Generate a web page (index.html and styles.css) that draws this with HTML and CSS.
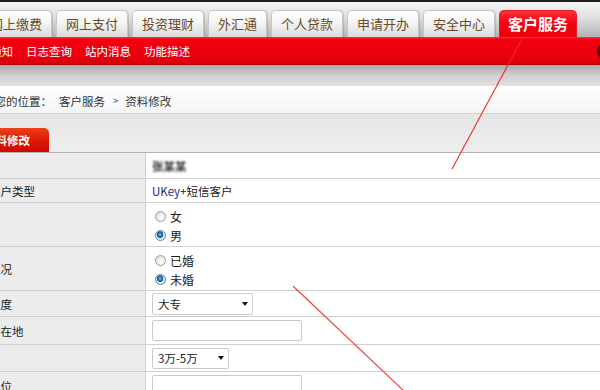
FILE: index.html
```html
<!DOCTYPE html>
<html lang="zh-CN">
<head>
<meta charset="utf-8">
<title>资料修改</title>
<link rel="stylesheet" href="styles.css">
</head>
<body>
<div class="topline"></div>
<header class="header">
  <nav class="tabs">
    <a class="tab">网上缴费</a>
    <a class="tab">网上支付</a>
    <a class="tab">投资理财</a>
    <a class="tab">外汇通</a>
    <a class="tab">个人贷款</a>
    <a class="tab">申请开办</a>
    <a class="tab">安全中心</a>
    <a class="tab active">客户服务</a>
  </nav>
</header>
<div class="redbar">
  <div class="menu">
    <a>通知</a>
    <a>日志查询</a>
    <a>站内消息</a>
    <a>功能描述</a>
  </div>
  <span class="knob"></span>
</div>
<div class="shade"></div>
<div class="crumb">
  <div class="crumb-inner">
    <span>您的位置：</span>
    <span class="crumb-link">客户服务</span>
    <span class="sep">&gt;</span>
    <span>资料修改</span>
  </div>
</div>
<div class="subtabs">
  <div class="subtab">资料修改</div>
</div>
<div class="form">
  <div class="row r1">
    <div class="label"></div>
    <div class="value"><span class="blur">张某某</span></div>
  </div>
  <div class="row r2">
    <div class="label"><span class="cut1">客户类型</span></div>
    <div class="value"><span class="latin">UKey</span>+短信客户</div>
  </div>
  <div class="row r3">
    <div class="label"></div>
    <div class="value">
      <div class="radios">
        <label class="opt"><input type="radio" name="sex" class="radio">女</label>
        <label class="opt"><input type="radio" name="sex" class="radio" checked>男</label>
      </div>
    </div>
  </div>
  <div class="row r4">
    <div class="label"><span class="cut3">婚姻状况</span></div>
    <div class="value">
      <div class="radios">
        <label class="opt"><input type="radio" name="mar" class="radio">已婚</label>
        <label class="opt"><input type="radio" name="mar" class="radio" checked>未婚</label>
      </div>
    </div>
  </div>
  <div class="row r5">
    <div class="label"><span class="cut3">教育程度</span></div>
    <div class="value">
      <div class="select"><span>大专</span><span class="caret"></span></div>
    </div>
  </div>
  <div class="row r6">
    <div class="label"><span class="cut1">所在地</span></div>
    <div class="value"><input class="field" type="text"></div>
  </div>
  <div class="row r7">
    <div class="label"></div>
    <div class="value">
      <div class="select small"><span>3万-5万</span><span class="caret"></span></div>
    </div>
  </div>
  <div class="row r8">
    <div class="label"><span class="cut1">单位</span></div>
    <div class="value"><input class="field" type="text"></div>
  </div>
</div>
<svg class="marks" width="600" height="390" viewBox="0 0 600 390">
  <line x1="523" y1="37" x2="452" y2="169" stroke="#f02828" stroke-width="1.1"/>
  <line x1="293" y1="286" x2="405" y2="392" stroke="#f23a3a" stroke-width="1.1"/>
</svg>
</body>
</html>
```
FILE: styles.css
```css
html, body {
  margin: 0;
  padding: 0;
}
body {
  width: 600px;
  height: 390px;
  overflow: hidden;
  position: relative;
  background: #ffffff;
  font-family: "Noto Sans CJK SC", "Liberation Sans", sans-serif;
  color: #222;
}
a { text-decoration: none; cursor: pointer; }

.topline {
  height: 2px;
  background: #1e1e1e;
}
.header {
  height: 35px;
  display: flex;
  align-items: flex-end;
  background: linear-gradient(#f4f4f4, #e2e2e2 40%, #b4b4b4);
}
.tabs {
  display: flex;
  gap: 4px;
  margin-left: -20px;
  height: 27px;
}
.tab {
  box-sizing: border-box;
  height: 27px;
  padding: 0 9px;
  border: 1px solid #c6c6c6;
  border-bottom: none;
  border-radius: 5px 5px 0 0;
  background: linear-gradient(#ffffff, #f5f5f5 45%, #dadada);
  color: #6b4a28;
  font-size: 13px;
  line-height: 26px;
  white-space: nowrap;
  box-shadow: 1px 0 1px rgba(0,0,0,0.12);
}
.tab.active {
  padding: 0 8px;
  border-color: #e0202a;
  background: linear-gradient(#ff2e36, #f2000f 50%, #ec000e);
  color: #fff;
  font-weight: bold;
  font-size: 15px;
  box-shadow: none;
}

.redbar {
  box-sizing: border-box;
  height: 28px;
  display: flex;
  align-items: center;
  justify-content: space-between;
  background: linear-gradient(#ff3a40 0, #f2000f 2px, #ec000e 70%, #d6000b);
  border-bottom: 1px solid #b0000a;
}
.menu {
  display: flex;
  gap: 13px;
  margin-left: -10px;
}
.menu a {
  color: #fff;
  font-size: 11.5px;
  line-height: 16px;
  white-space: nowrap;
}
.knob {
  width: 14px;
  height: 16px;
  border-radius: 50%;
  background: #6a0006;
  margin-right: -11px;
}

.shade {
  height: 21px;
  background: linear-gradient(#a8a8a8, #d0d0d0 50%, #e2e2e2);
}

.crumb {
  box-sizing: border-box;
  height: 28px;
  padding-top: 2px;
  display: flex;
  align-items: center;
  background: linear-gradient(#ffffff, #f4f4f4);
  border-bottom: 1px solid #d4d4d4;
  font-size: 11.5px;
  color: #333;
}
.crumb-inner {
  display: flex;
  align-items: center;
  margin-left: -5.5px;
  white-space: nowrap;
}
.crumb-link { margin-left: 7px; }
.sep {
  color: #5a7ea6;
  font-size: 9px;
  font-weight: bold;
  margin: 0 7px 0 8px;
}

.subtabs {
  box-sizing: border-box;
  height: 39px;
  display: flex;
  align-items: flex-end;
  background: linear-gradient(#e5e5e5, #eeeeee);
  border-bottom: 1px solid #b2b2b2;
}
.subtab {
  height: 24px;
  margin-left: -16px;
  padding: 0 19px 0 0;
  border-radius: 0 5px 0 0;
  background: linear-gradient(#ef4018, #dc1a04 50%, #d20600);
  color: #fff;
  font-weight: bold;
  font-size: 11.5px;
  line-height: 25px;
  white-space: nowrap;
}

.form {
  display: flex;
  flex-direction: column;
}
.row {
  box-sizing: border-box;
  display: flex;
  border-bottom: 1px solid #cfcfcf;
}
.r1 { height: 26px; }
.r2 { height: 24px; }
.r3 { height: 44px; }
.r4 { height: 44px; }
.r5 { height: 26px; }
.r6 { height: 28px; }
.r7 { height: 27px; }
.r8 { height: 28px; }

.label {
  flex: none;
  width: 145px;
  display: flex;
  align-items: center;
  overflow: hidden;
  white-space: nowrap;
  background: #ececec;
  border-right: 1px solid #cdcdcd;
  font-size: 11.5px;
  color: #1a1a1a;
}
.cut1 { margin-left: -11px; }
.cut3 { margin-left: -34px; }

.value {
  flex: 1;
  display: flex;
  align-items: center;
  padding-left: 6px;
  font-size: 11.5px;
  color: #1a1a1a;
  white-space: nowrap;
}
.latin { color: #1d2a7a; }
.blur {
  filter: blur(1px);
  color: #333;
  font-weight: bold;
}

.radios {
  display: flex;
  flex-direction: column;
  padding-top: 2px;
}
.opt {
  display: flex;
  align-items: center;
  height: 19px;
  font-size: 12px;
}
.radio {
  -webkit-appearance: none;
  appearance: none;
  box-sizing: border-box;
  width: 11px;
  height: 11px;
  margin: 0 4px 0 3px;
  border-radius: 50%;
  border: 1px solid #9c9c9c;
  background: radial-gradient(circle at 60% 65%, #ffffff 0, #f2f2f2 35%, #cfcfcf 100%);
}
.radio:checked {
  border-color: #6c7f96;
  background: radial-gradient(circle at 45% 40%, #8fd0ff 0, #1a86d8 1.5px, #0a4f9a 3px, #e8eef4 3.6px, #d4dbe2 100%);
}

.select {
  box-sizing: border-box;
  width: 101px;
  height: 22px;
  display: flex;
  align-items: center;
  justify-content: space-between;
  padding: 0 4px 0 5px;
  border: 1px solid #cbcbcb;
  border-radius: 2px;
  background: #fff;
  font-size: 11.5px;
}
.select.small { width: 77px; height: 21px; }
.caret {
  width: 0;
  height: 0;
  border-top: 4px solid #111;
  border-left: 3.5px solid transparent;
  border-right: 3.5px solid transparent;
}

.field {
  box-sizing: border-box;
  width: 150px;
  height: 21px;
  margin: 0;
  padding: 0 3px;
  border: 1px solid #cacaca;
  border-radius: 2px;
  background: #fff;
  font: inherit;
}

.marks {
  position: absolute;
  left: 0;
  top: 0;
  pointer-events: none;
}
```
